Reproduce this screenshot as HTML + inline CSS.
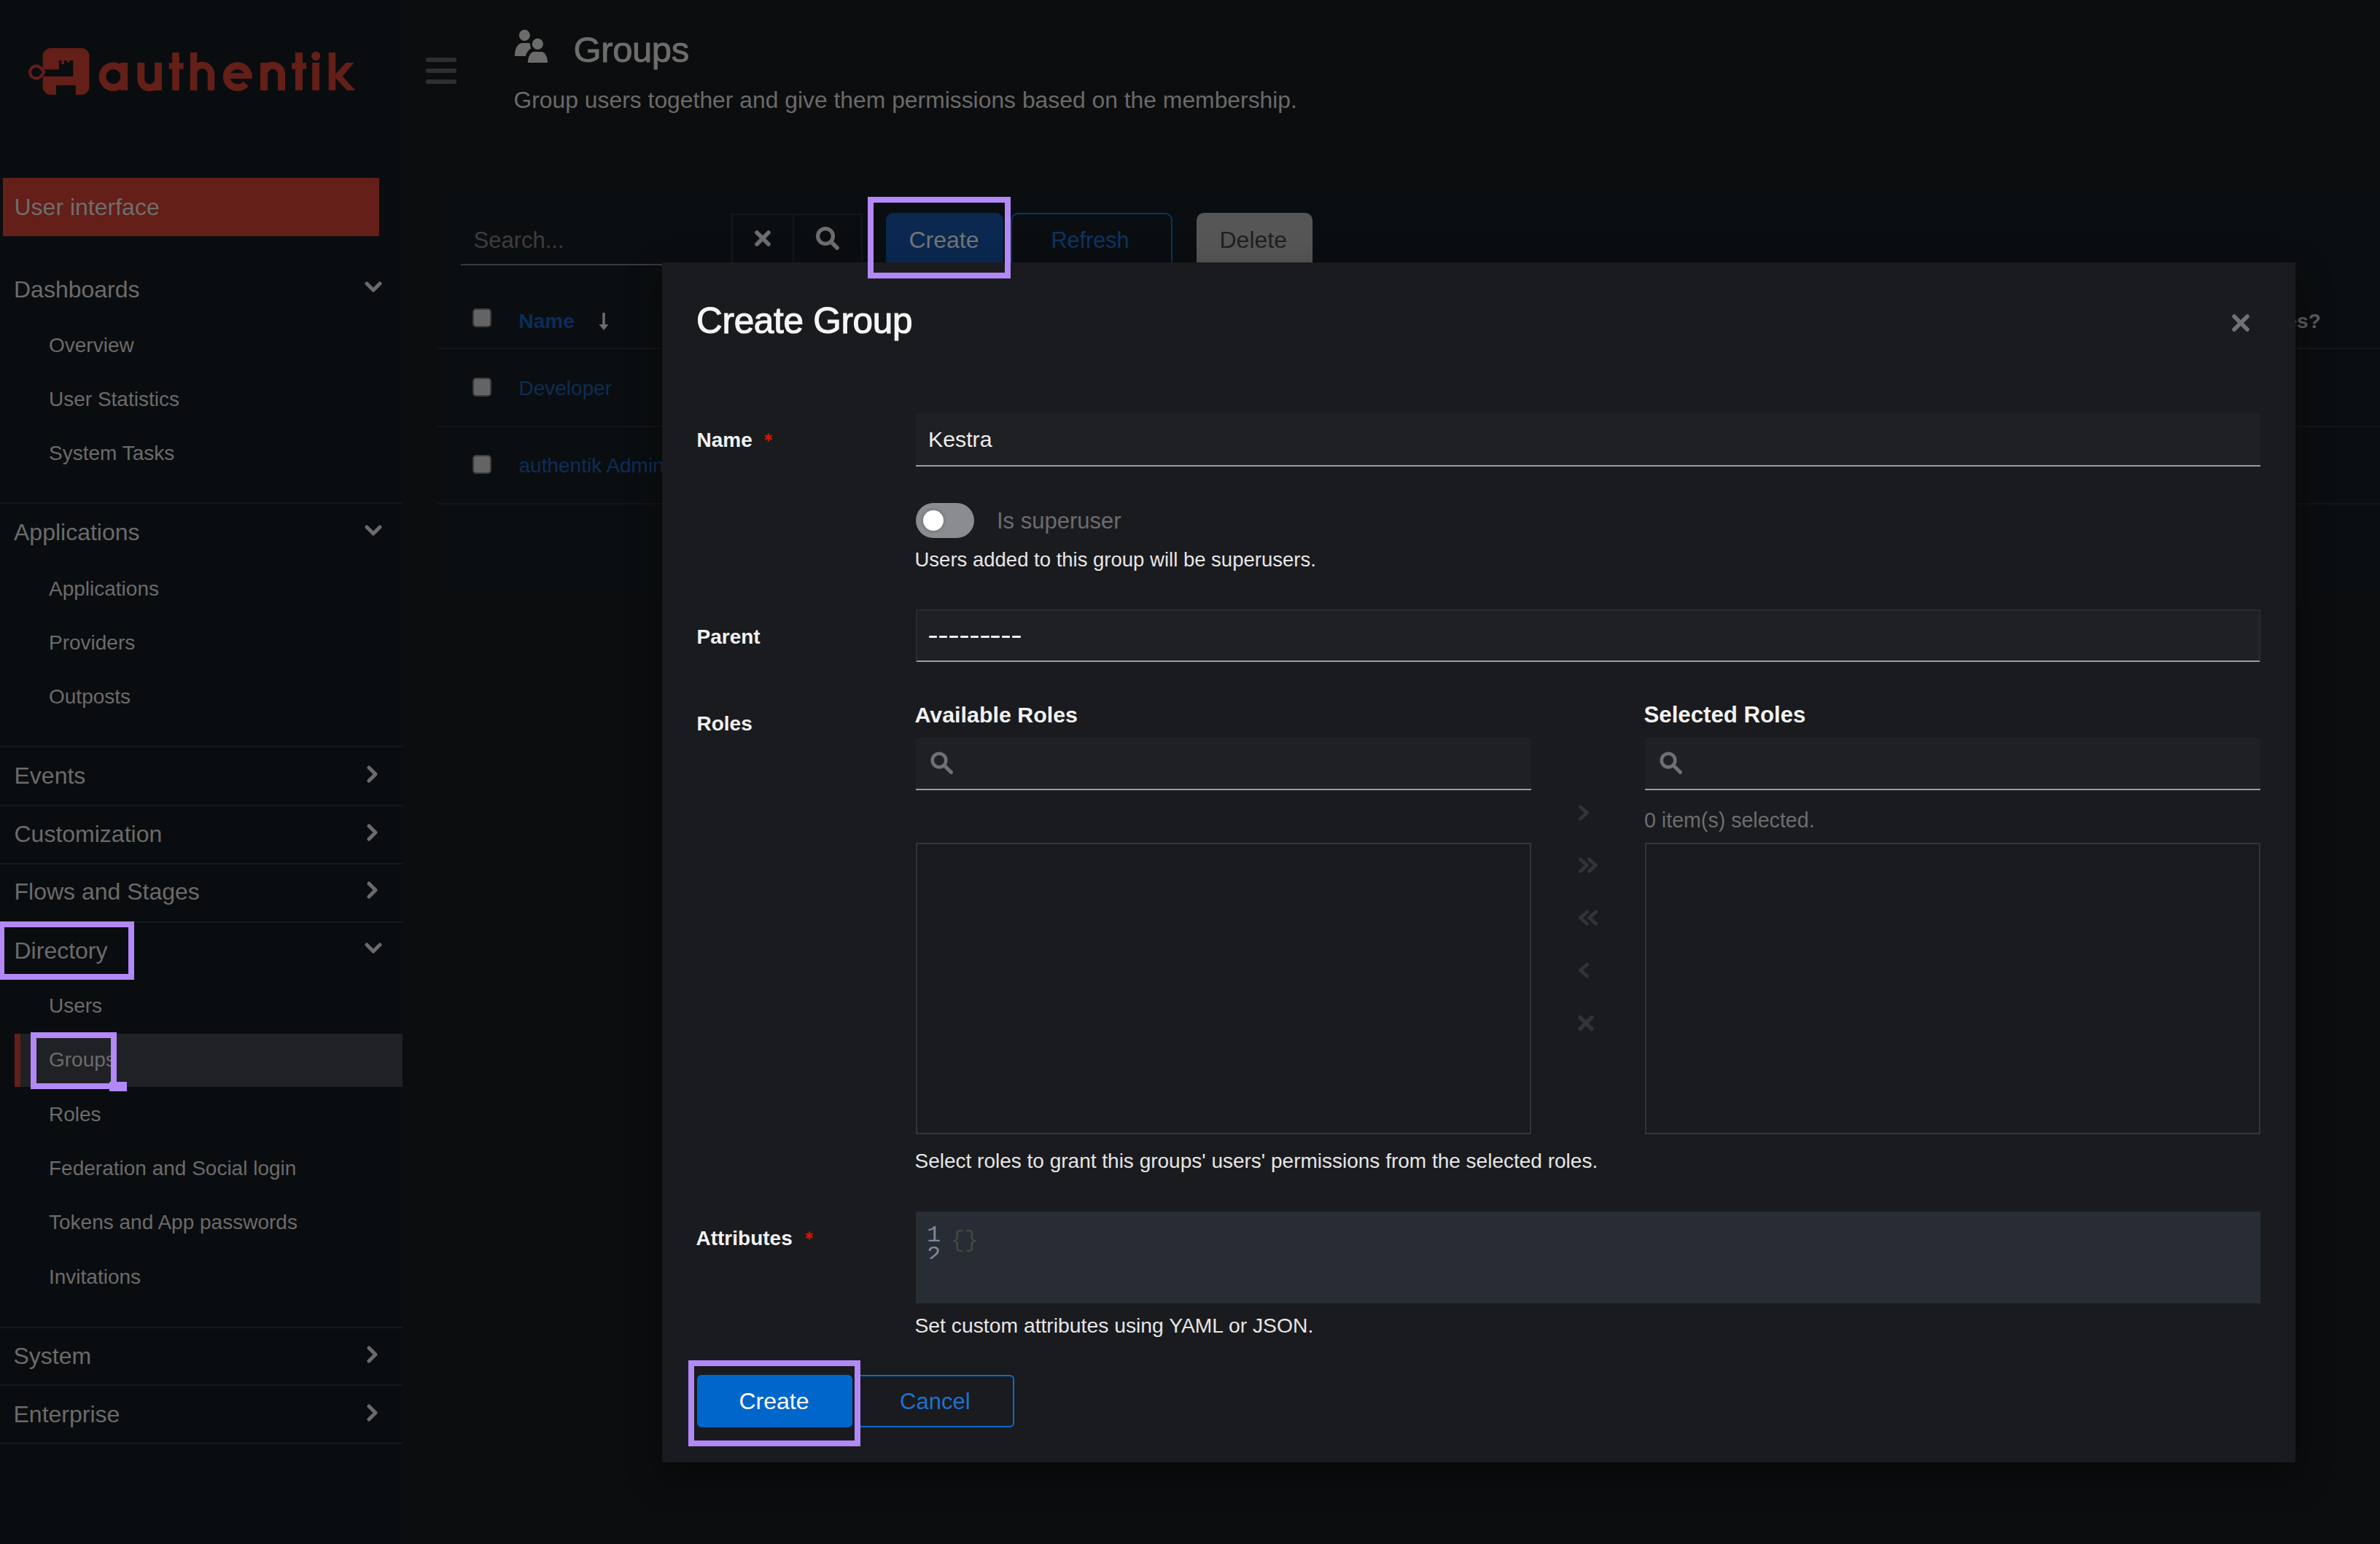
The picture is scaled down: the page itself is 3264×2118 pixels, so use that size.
<!DOCTYPE html>
<html><head><meta charset="utf-8"><title>authentik - Groups</title>
<style>
html,body{margin:0;padding:0;width:3264px;height:2118px;overflow:hidden;background:#0c0d0e}
body{position:relative;font-family:"Liberation Sans",sans-serif}
.t{position:absolute;white-space:nowrap;line-height:1}
.r{position:absolute}
</style></head><body>
<div class="r" style="left:0px;top:0px;width:552px;height:2118px;background:#0a0d0f"></div>
<div class="r" style="left:552px;top:0px;width:2712px;height:2118px;background:#0c0d0e"></div>
<svg class="r" style="left:38px;top:64px" width="88" height="70" viewBox="38 64 88 70">
<path fill="#631f18" fill-rule="evenodd" d="M69.6 66 H111.5 A11 11 0 0 1 122.5 77 V119 A11 11 0 0 1 111.5 130 H103.8 V117 H77 V130 H69.6 A11 11 0 0 1 58.6 119 V104.8 H100.2 V83 H95.3 V85.8 H92 V83 H88 V88 H84.5 V83 H81 V95.2 H58.6 V77 A11 11 0 0 1 69.6 66 Z"/>
<path fill="none" stroke="#631f18" stroke-width="3.9" d="M60.6 99 L56.1 93.6 A8.5 8.5 0 1 0 56.1 104.4 Z" stroke-linejoin="round"/>
</svg>
<svg class="r" style="left:130px;top:64px" width="365" height="66" viewBox="130 64 365 66">
<g fill="#631f18">
<rect x="165.1" y="86" width="10" height="37.9"/>
<rect x="236.2" y="72.1" width="9.7" height="51.8"/><rect x="231.8" y="86.3" width="19.9" height="8.4"/>
<rect x="260.9" y="72" width="9.4" height="51.9"/>
<rect x="357.1" y="86" width="10" height="37.9"/>
<rect x="405" y="72.1" width="10" height="51.8"/><rect x="400.2" y="86.3" width="19.9" height="8.4"/>
<rect x="428.1" y="86" width="10" height="37.9"/><circle cx="433.2" cy="76.9" r="6.1"/>
<rect x="450.7" y="72" width="9.5" height="51.9"/>
<path d="M460.1 101.5 L474.4 86 L485.6 86 L469.6 104.7 L487.6 123.9 L476 123.9 L460.1 107.1 Z"/>
<rect x="310" y="100.3" width="35.7" height="7.6"/>
</g>
<g fill="none" stroke="#631f18">
<circle cx="155.4" cy="105.2" r="14.95" stroke-width="9.7"/>
<path d="M193.3 86 V108.6 A11.85 11.85 0 0 0 217 108.6 M217 86 V123.9" stroke-width="9.8"/>
<path d="M265.5 123.9 V101.5 A12 12 0 0 1 289.5 101.5 V123.9" stroke-width="9.4"/>
<path d="M340.7 105.2 A15 15 0 1 0 337.2 114.8" stroke-width="9.8"/>
<path d="M362.1 123.9 V101.6 A11.95 11.95 0 0 1 386 101.6 V123.9" stroke-width="10"/>
</g></svg>
<div class="r" style="left:4px;top:244px;width:516px;height:80px;background:#631f18"></div>
<div class="t" style="left:19.5px;top:267.9px;font-size:32px;color:#6e6e6e;font-weight:400;">User interface</div>
<div class="t" style="left:19.0px;top:380.5px;font-size:32px;color:#6b6b6b;font-weight:400;">Dashboards</div>
<svg class="r" style="left:500px;top:386px" width="24" height="16" viewBox="0 0 24 16"><path d="M3 3 L12 12 L21 3" fill="none" stroke="#6b6b6b" stroke-width="5" stroke-linecap="round" stroke-linejoin="round"/></svg>
<div class="t" style="left:67.0px;top:459.9px;font-size:28px;color:#6b6b6b;font-weight:400;">Overview</div>
<div class="t" style="left:67.0px;top:534.0px;font-size:28px;color:#6b6b6b;font-weight:400;">User Statistics</div>
<div class="t" style="left:67.0px;top:608.3px;font-size:28px;color:#6b6b6b;font-weight:400;">System Tasks</div>
<div class="r" style="left:0px;top:689px;width:552px;height:2px;background:#16191b"></div>
<div class="t" style="left:19.0px;top:713.9px;font-size:32px;color:#6b6b6b;font-weight:400;">Applications</div>
<svg class="r" style="left:500px;top:720px" width="24" height="16" viewBox="0 0 24 16"><path d="M3 3 L12 12 L21 3" fill="none" stroke="#6b6b6b" stroke-width="5" stroke-linecap="round" stroke-linejoin="round"/></svg>
<div class="t" style="left:67.0px;top:794.3px;font-size:28px;color:#6b6b6b;font-weight:400;">Applications</div>
<div class="t" style="left:67.0px;top:867.8px;font-size:28px;color:#6b6b6b;font-weight:400;">Providers</div>
<div class="t" style="left:67.0px;top:941.9px;font-size:28px;color:#6b6b6b;font-weight:400;">Outposts</div>
<div class="r" style="left:0px;top:1023px;width:552px;height:2px;background:#16191b"></div>
<div class="t" style="left:19.5px;top:1047.9px;font-size:32px;color:#6b6b6b;font-weight:400;">Events</div>
<svg class="r" style="left:503px;top:1050px" width="16" height="24" viewBox="0 0 16 24"><path d="M3 3 L12 12 L3 21" fill="none" stroke="#6b6b6b" stroke-width="5" stroke-linecap="round" stroke-linejoin="round"/></svg>
<div class="r" style="left:0px;top:1104px;width:552px;height:2px;background:#16191b"></div>
<div class="t" style="left:19.5px;top:1127.9px;font-size:32px;color:#6b6b6b;font-weight:400;">Customization</div>
<svg class="r" style="left:503px;top:1130px" width="16" height="24" viewBox="0 0 16 24"><path d="M3 3 L12 12 L3 21" fill="none" stroke="#6b6b6b" stroke-width="5" stroke-linecap="round" stroke-linejoin="round"/></svg>
<div class="r" style="left:0px;top:1184px;width:552px;height:2px;background:#16191b"></div>
<div class="t" style="left:19.5px;top:1206.9px;font-size:32px;color:#6b6b6b;font-weight:400;">Flows and Stages</div>
<svg class="r" style="left:503px;top:1209px" width="16" height="24" viewBox="0 0 16 24"><path d="M3 3 L12 12 L3 21" fill="none" stroke="#6b6b6b" stroke-width="5" stroke-linecap="round" stroke-linejoin="round"/></svg>
<div class="r" style="left:0px;top:1264px;width:552px;height:2px;background:#16191b"></div>
<div class="t" style="left:19.5px;top:1287.9px;font-size:32px;color:#6b6b6b;font-weight:400;">Directory</div>
<svg class="r" style="left:500px;top:1293px" width="24" height="16" viewBox="0 0 24 16"><path d="M3 3 L12 12 L21 3" fill="none" stroke="#6b6b6b" stroke-width="5" stroke-linecap="round" stroke-linejoin="round"/></svg>
<div class="t" style="left:67.0px;top:1366.3px;font-size:28px;color:#6b6b6b;font-weight:400;">Users</div>
<div class="r" style="left:20px;top:1418px;width:532px;height:73px;background:#202124"></div>
<div class="r" style="left:20px;top:1418px;width:8px;height:73px;background:#631f18"></div>
<div class="t" style="left:67.0px;top:1440.3px;font-size:28px;color:#6b6b6b;font-weight:400;">Groups</div>
<div class="t" style="left:67.0px;top:1515.3px;font-size:28px;color:#6b6b6b;font-weight:400;">Roles</div>
<div class="t" style="left:67.0px;top:1589.3px;font-size:28px;color:#6b6b6b;font-weight:400;">Federation and Social login</div>
<div class="t" style="left:67.0px;top:1663.3px;font-size:28px;color:#6b6b6b;font-weight:400;">Tokens and App passwords</div>
<div class="t" style="left:67.0px;top:1737.7px;font-size:28px;color:#6b6b6b;font-weight:400;">Invitations</div>
<div class="r" style="left:0px;top:1820px;width:552px;height:2px;background:#16191b"></div>
<div class="t" style="left:18.5px;top:1843.9px;font-size:32px;color:#6b6b6b;font-weight:400;">System</div>
<svg class="r" style="left:503px;top:1846px" width="16" height="24" viewBox="0 0 16 24"><path d="M3 3 L12 12 L3 21" fill="none" stroke="#6b6b6b" stroke-width="5" stroke-linecap="round" stroke-linejoin="round"/></svg>
<div class="r" style="left:0px;top:1899px;width:552px;height:2px;background:#16191b"></div>
<div class="t" style="left:18.5px;top:1923.9px;font-size:32px;color:#6b6b6b;font-weight:400;">Enterprise</div>
<svg class="r" style="left:503px;top:1926px" width="16" height="24" viewBox="0 0 16 24"><path d="M3 3 L12 12 L3 21" fill="none" stroke="#6b6b6b" stroke-width="5" stroke-linecap="round" stroke-linejoin="round"/></svg>
<div class="r" style="left:0px;top:1979px;width:552px;height:2px;background:#16191b"></div>
<div class="r" style="left:584px;top:78.6px;width:42px;height:6.4px;background:#2e2f31;border-radius:2px"></div>
<div class="r" style="left:584px;top:93.7px;width:42px;height:6.4px;background:#2e2f31;border-radius:2px"></div>
<div class="r" style="left:584px;top:108.7px;width:42px;height:6.4px;background:#2e2f31;border-radius:2px"></div>
<svg class="r" style="left:700px;top:36px" width="56" height="54" viewBox="700 36 56 54">
<circle cx="719.4" cy="48.3" r="7.6" fill="#6b6b6b"/>
<circle cx="737.4" cy="60.4" r="7.6" fill="#6b6b6b"/>
<path fill="#6b6b6b" d="M706 77 C706 66 710 59 717 59 L726.5 59 C727 62 727.5 64 728 66.5 C724 69 721.6 73 721 77 Z"/>
<path fill="#6b6b6b" d="M723.8 86 C724 77 728 71 733 71 L742 71 C747 71 751 77 751 86 Z"/>
</svg>
<div class="t" style="left:786.5px;top:43.5px;font-size:49px;color:#6d6d6d;font-weight:400;letter-spacing:-0.4px;-webkit-text-stroke:0.9px #6d6d6d">Groups</div>
<div class="t" style="left:704.5px;top:122.0px;font-size:31.85px;color:#6a6a6a;font-weight:400;">Group users together and give them permissions based on the membership.</div>
<div class="r" style="left:600px;top:261px;width:2664px;height:567px;background:#0b0e10"></div>
<div class="r" style="left:632px;top:362px;width:372px;height:2px;background:#38393b"></div>
<div class="t" style="left:649.5px;top:313.8px;font-size:31px;color:#3d3d3d;font-weight:400;">Search...</div>
<div class="r" style="left:1003px;top:293px;width:180px;height:80px;border:2px solid #15181a;box-sizing:border-box"></div>
<div class="r" style="left:1087px;top:293px;width:2px;height:80px;background:#15181a"></div>
<svg class="r" style="left:1034px;top:315px" width="24" height="24" viewBox="0 0 24 24"><path d="M4 4 L20 20 M20 4 L4 20" stroke="#6d6d6d" stroke-width="5.6" stroke-linecap="round"/></svg>
<svg class="r" style="left:1118px;top:310px" width="34" height="34" viewBox="0 0 34 34"><circle cx="14" cy="14" r="10.4" fill="none" stroke="#6d6d6d" stroke-width="5.2"/><path d="M22 22 L30 30" stroke="#6d6d6d" stroke-width="5.8" stroke-linecap="round"/></svg>
<div class="r" style="left:1215px;top:292px;width:161px;height:90px;background:#0a2850;border-radius:10px 10px 0 0"></div>
<div class="t" style="left:1246.5px;top:312.5px;font-size:32px;color:#747474;font-weight:400;">Create</div>
<div class="r" style="left:1386px;top:292px;width:222px;height:90px;border:2px solid #0a3465;border-radius:10px 10px 0 0;box-sizing:border-box"></div>
<div class="t" style="left:1441.5px;top:313.7px;font-size:30.6px;color:#0c3565;font-weight:400;">Refresh</div>
<div class="r" style="left:1641px;top:292px;width:159px;height:90px;background:#565656;border-radius:10px 10px 0 0"></div>
<div class="t" style="left:1672.5px;top:312.5px;font-size:32px;color:#1f1f1f;font-weight:400;">Delete</div>
<div class="r" style="left:648px;top:423px;width:26px;height:26px;background:#646464;border:2px solid #3c3c3c;border-radius:5px;box-sizing:border-box"></div>
<div class="t" style="left:711.5px;top:427.3px;font-size:28px;color:#0c2d58;font-weight:700;">Name</div>
<svg class="r" style="left:818px;top:426px" width="20" height="30" viewBox="0 0 20 30"><path d="M10 3 V25" stroke="#6d6d6d" stroke-width="3.4"/><path d="M3.5 19 L10 27 L16.5 19 Z" fill="#6d6d6d"/></svg>
<div class="t" style="left:3134.5px;top:427.3px;font-size:28px;color:#5c5c5c;font-weight:700;">es?</div>
<div class="r" style="left:600px;top:477px;width:2664px;height:2px;background:#131618"></div>
<div class="r" style="left:648px;top:518px;width:26px;height:26px;background:#646464;border:2px solid #3c3c3c;border-radius:5px;box-sizing:border-box"></div>
<div class="t" style="left:711.5px;top:519.3px;font-size:28px;color:#0c2d58;font-weight:400;">Developer</div>
<div class="r" style="left:600px;top:584px;width:2664px;height:2px;background:#131618"></div>
<div class="r" style="left:648px;top:624px;width:26px;height:26px;background:#646464;border:2px solid #3c3c3c;border-radius:5px;box-sizing:border-box"></div>
<div class="t" style="left:711.5px;top:625.3px;font-size:28px;color:#0c2d58;font-weight:400;">authentik Admins</div>
<div class="r" style="left:600px;top:690px;width:2664px;height:2px;background:#131618"></div>
<div class="r" style="left:908px;top:360px;width:2240px;height:1646px;background:#1a1b1e;box-shadow:0 18px 44px rgba(0,0,0,0.4)"></div>
<div class="t" style="left:955px;top:414.6px;font-size:49.5px;color:#f5f5f5;font-weight:400;-webkit-text-stroke:1.1px #f5f5f5;letter-spacing:-0.3px">Create Group</div>
<svg class="r" style="left:3060px;top:430px" width="26" height="26" viewBox="0 0 26 26"><path d="M4 4 L22 22 M22 4 L4 22" stroke="#707174" stroke-width="5.5" stroke-linecap="round"/></svg>
<div class="t" style="left:955.5px;top:590.3px;font-size:28px;color:#f2f2f2;font-weight:700;">Name</div>
<svg class="r" style="left:1048px;top:594px" width="12" height="12" viewBox="0 0 12 12"><path d="M6 0.5 V11.5 M1.2 3.2 L10.8 8.8 M10.8 3.2 L1.2 8.8" stroke="#c9190b" stroke-width="2.4"/></svg>
<div class="r" style="left:1256px;top:567px;width:1844px;height:73px;background:#1f2024;border-bottom:2px solid #9c9da0;box-sizing:border-box"></div>
<div class="t" style="left:1273.0px;top:588.3px;font-size:30.3px;color:#ededed;font-weight:400;">Kestra</div>
<div class="r" style="left:1256px;top:690px;width:80px;height:48px;background:#8b8c8f;border-radius:24px"></div>
<div class="r" style="left:1266px;top:700px;width:28px;height:28px;background:#ffffff;border-radius:50%;box-shadow:0 0 5px rgba(0,0,0,0.3)"></div>
<div class="t" style="left:1367.0px;top:699.1px;font-size:31px;color:#6b6c6f;font-weight:400;">Is superuser</div>
<div class="t" style="left:1254.5px;top:753.7px;font-size:27.5px;color:#e6e6e6;font-weight:400;">Users added to this group will be superusers.</div>
<div class="t" style="left:955.5px;top:860.0px;font-size:28px;color:#f2f2f2;font-weight:700;">Parent</div>
<div class="r" style="left:1256px;top:836px;width:1844px;height:72px;background:#1f2024;border:2px solid #2a2b2f;border-bottom:2px solid #9c9da0;box-sizing:border-box"></div>
<div class="r" style="left:1273.6px;top:872.2px;width:11.5px;height:3px;background:#f0f0f0;border-radius:1px"></div>
<div class="r" style="left:1287.8999999999999px;top:872.2px;width:11.5px;height:3px;background:#f0f0f0;border-radius:1px"></div>
<div class="r" style="left:1302.1999999999998px;top:872.2px;width:11.5px;height:3px;background:#f0f0f0;border-radius:1px"></div>
<div class="r" style="left:1316.5px;top:872.2px;width:11.5px;height:3px;background:#f0f0f0;border-radius:1px"></div>
<div class="r" style="left:1330.8px;top:872.2px;width:11.5px;height:3px;background:#f0f0f0;border-radius:1px"></div>
<div class="r" style="left:1345.1px;top:872.2px;width:11.5px;height:3px;background:#f0f0f0;border-radius:1px"></div>
<div class="r" style="left:1359.3999999999999px;top:872.2px;width:11.5px;height:3px;background:#f0f0f0;border-radius:1px"></div>
<div class="r" style="left:1373.6999999999998px;top:872.2px;width:11.5px;height:3px;background:#f0f0f0;border-radius:1px"></div>
<div class="r" style="left:1388.0px;top:872.2px;width:11.5px;height:3px;background:#f0f0f0;border-radius:1px"></div>
<div class="t" style="left:955.5px;top:979.3px;font-size:28px;color:#f2f2f2;font-weight:700;">Roles</div>
<div class="t" style="left:1254.5px;top:965.3px;font-size:30.4px;color:#f2f2f2;font-weight:700;">Available Roles</div>
<div class="t" style="left:2254.5px;top:964.6px;font-size:31.2px;color:#f2f2f2;font-weight:700;">Selected Roles</div>
<div class="r" style="left:1256px;top:1012px;width:844px;height:72px;background:#1f2024;border-bottom:2px solid #9c9da0;box-sizing:border-box"></div>
<svg class="r" style="left:1275px;top:1030px" width="34" height="34" viewBox="0 0 34 34"><circle cx="13" cy="13" r="9.3" fill="none" stroke="#6f7073" stroke-width="4.6"/><path d="M20 20 L29.5 29.5" stroke="#6f7073" stroke-width="5" stroke-linecap="round"/></svg>
<div class="r" style="left:1256px;top:1156px;width:844px;height:400px;border:2px solid #333438;box-sizing:border-box"></div>
<div class="r" style="left:2256px;top:1012px;width:844px;height:72px;background:#1f2024;border-bottom:2px solid #9c9da0;box-sizing:border-box"></div>
<svg class="r" style="left:2275px;top:1030px" width="34" height="34" viewBox="0 0 34 34"><circle cx="13" cy="13" r="9.3" fill="none" stroke="#6f7073" stroke-width="4.6"/><path d="M20 20 L29.5 29.5" stroke="#6f7073" stroke-width="5" stroke-linecap="round"/></svg>
<div class="r" style="left:2256px;top:1156px;width:844px;height:400px;border:2px solid #333438;box-sizing:border-box"></div>
<div class="t" style="left:2255.0px;top:1110.8px;font-size:28.6px;color:#6c6d70;font-weight:400;">0 item(s) selected.</div>
<svg class="r" style="left:2155px;top:1095px" width="50" height="330" viewBox="2155 1095 50 330">
<g fill="none" stroke="#323336" stroke-width="5" stroke-linecap="round" stroke-linejoin="round">
<path d="M2167.5 1107 L2176.5 1115 L2167.5 1123"/>
<path d="M2167.5 1179 L2176.5 1187 L2167.5 1195 M2179.5 1179 L2188.5 1187 L2179.5 1195"/>
<path d="M2176.5 1251 L2167.5 1259 L2176.5 1267 M2188.5 1251 L2179.5 1259 L2188.5 1267"/>
<path d="M2176.5 1323 L2167.5 1331 L2176.5 1339"/>
<path stroke-width="5.4" d="M2167 1395.5 L2183 1411.5 M2183 1395.5 L2167 1411.5"/>
</g></svg>
<div class="t" style="left:1254.5px;top:1579.3px;font-size:28px;color:#e6e6e6;font-weight:400;">Select roles to grant this groups&#39; users&#39; permissions from the selected roles.</div>
<div class="t" style="left:954.5px;top:1684.9px;font-size:28px;color:#f2f2f2;font-weight:700;">Attributes</div>
<svg class="r" style="left:1104px;top:1689px" width="12" height="12" viewBox="0 0 12 12"><path d="M6 0.5 V11.5 M1.2 3.2 L10.8 8.8 M10.8 3.2 L1.2 8.8" stroke="#c9190b" stroke-width="2.4"/></svg>
<div class="r" style="left:1256px;top:1662px;width:1844px;height:126px;background:#282c34"></div>
<div class="r" style="left:1271px;top:1660px;width:30px;height:67px;overflow:hidden"><div style="font-family:'Liberation Mono',monospace;font-size:32px;line-height:28px;color:#7d8799;position:absolute;left:0px;top:20.6px">1<br>2</div></div>
<div class="t" style="left:1303.5px;top:1685.9px;font-size:32px;color:#3e4a3e;font-weight:400;font-family:'Liberation Mono',monospace;letter-spacing:0px">{}</div>
<div class="t" style="left:1254.5px;top:1803.7px;font-size:28.3px;color:#e6e6e6;font-weight:400;">Set custom attributes using YAML or JSON.</div>
<div class="r" style="left:1172px;top:1886px;width:219px;height:72px;border:2px solid #0a6bd0;border-left:none;border-radius:0 6px 6px 0;box-sizing:border-box"></div>
<div class="t" style="left:1234.1px;top:1907.2px;font-size:31px;color:#1f70d0;font-weight:400;">Cancel</div>
<div class="r" style="left:956px;top:1886px;width:213px;height:72px;background:#0066cc;border-radius:6px"></div>
<div class="t" style="left:1013.5px;top:1906.3px;font-size:32px;color:#ffffff;font-weight:400;">Create</div>
<div class="r" style="left:1190px;top:270px;width:196px;height:112px;border:8px solid #b388f7;box-sizing:border-box"></div>
<div class="r" style="left:-2px;top:1264px;width:186px;height:80px;border:8px solid #b388f7;box-sizing:border-box"></div>
<div class="r" style="left:42px;top:1416px;width:118px;height:78px;border:8px solid #b388f7;box-sizing:border-box"></div>
<div class="r" style="left:150px;top:1484px;width:24px;height:13px;background:#b388f7"></div>
<div class="r" style="left:944px;top:1866px;width:236px;height:118px;border:8px solid #b388f7;box-sizing:border-box"></div>
</body></html>
